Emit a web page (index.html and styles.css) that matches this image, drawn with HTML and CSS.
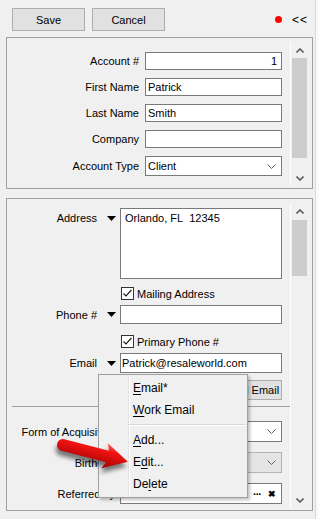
FILE: index.html
```html
<!DOCTYPE html>
<html lang="en">
<head>
    <meta charset="UTF-8">
    <meta name="viewport" content="width=device-width, initial-scale=1.0">
    <title>Customer</title>
    <link rel="stylesheet" href="styles.css">
</head>
<body>

<div class="window">
    <div class="toolbar">
        <button class="btn">Save</button>
        <button class="btn">Cancel</button>
        <span class="dot"></span>
        <span class="collapse">&lt;&lt;</span>
    </div>

    <div class="panel panel-top">
        <div class="form-top">
            <label>Account #</label>
            <div class="field num">1</div>
            <label>First Name</label>
            <div class="field">Patrick</div>
            <label>Last Name</label>
            <div class="field">Smith</div>
            <label>Company</label>
            <div class="field"></div>
            <label>Account Type</label>
            <div class="field select">Client
                <svg class="chev" width="9" height="5" viewBox="0 0 9 5"><polyline points="0.5,0.5 4.5,4.5 8.5,0.5"/></svg>
            </div>
        </div>
        <div class="scrollbar sb-top">
            <div class="sb-btn"><svg width="8" height="5" viewBox="0 0 8 5"><polyline points="0.5,4.5 4,1 7.5,4.5"/></svg></div>
            <div class="thumb thumb-top"></div>
            <div class="track"></div>
            <div class="sb-btn"><svg width="8" height="5" viewBox="0 0 8 5"><polyline points="0.5,0.5 4,4 7.5,0.5"/></svg></div>
        </div>
    </div>

    <div class="panel panel-bottom">
        <div class="form-bottom">
            <div class="row row-address">
                <label>Address</label>
                <svg class="tri" width="9" height="5" viewBox="0 0 9 5"><polygon points="0,0 9,0 4.5,5"/></svg>
                <div class="field memo">Orlando, FL&nbsp;&nbsp;12345</div>
            </div>
            <div class="row row-check row-mail">
                <div class="check">
                    <span class="box"><svg width="11" height="11" viewBox="0 0 11 11"><polyline points="1.5,5.5 4,8 9.5,2"/></svg></span>
                    Mailing Address
                </div>
            </div>
            <div class="row row-phone">
                <label>Phone #</label>
                <svg class="tri" width="9" height="5" viewBox="0 0 9 5"><polygon points="0,0 9,0 4.5,5"/></svg>
                <div class="field"></div>
            </div>
            <div class="row row-check row-primary">
                <div class="check">
                    <span class="box"><svg width="11" height="11" viewBox="0 0 11 11"><polyline points="1.5,5.5 4,8 9.5,2"/></svg></span>
                    Primary Phone #
                </div>
            </div>
            <div class="row row-email">
                <label>Email</label>
                <svg class="tri" width="9" height="5" viewBox="0 0 9 5"><polygon points="0,0 9,0 4.5,5"/></svg>
                <div class="field">Patrick@resaleworld.com</div>
            </div>
            <div class="row row-send">
                <button class="btn btn-send">Send Email</button>
            </div>
            <div class="separator"></div>
            <div class="row row-wide row-acq">
                <label>Form of Acquisition</label>
                <div class="field select">
                    <svg class="chev" width="9" height="5" viewBox="0 0 9 5"><polyline points="0.5,0.5 4.5,4.5 8.5,0.5"/></svg>
                </div>
            </div>
            <div class="row row-wide row-birth">
                <label>Birthday</label>
                <div class="field select disabled">
                    <svg class="chev" width="9" height="5" viewBox="0 0 9 5"><polyline points="0.5,0.5 4.5,4.5 8.5,0.5"/></svg>
                </div>
            </div>
            <div class="row row-wide row-ref">
                <label>Referred by</label>
                <div class="field lookup">
                    <span class="dots">&middot;&middot;&middot;</span>
                    <span class="clear">&#10006;</span>
                </div>
            </div>
        </div>
        <div class="scrollbar sb-bottom">
            <div class="sb-btn"><svg width="8" height="5" viewBox="0 0 8 5"><polyline points="0.5,4.5 4,1 7.5,4.5"/></svg></div>
            <div class="thumb thumb-bottom"></div>
            <div class="track"></div>
            <div class="sb-btn"><svg width="8" height="5" viewBox="0 0 8 5"><polyline points="0.5,0.5 4,4 7.5,0.5"/></svg></div>
        </div>
    </div>
</div>
<div class="edge"></div>

<!-- context menu opened from the Email arrow -->
<div class="menu">
    <div class="menu-item"><u>E</u>mail*</div>
    <div class="menu-item"><u>W</u>ork Email</div>
    <div class="menu-sep"></div>
    <div class="menu-item"><u>A</u>dd...</div>
    <div class="menu-item">E<u>d</u>it...</div>
    <div class="menu-item">De<u>l</u>ete</div>
</div>

<!-- callout arrow pointing at Edit... -->
<svg class="callout" width="160" height="100" viewBox="0 0 160 100">
    <defs>
        <linearGradient id="red" x1="0" y1="-13" x2="0" y2="13" gradientUnits="userSpaceOnUse">
            <stop offset="0" stop-color="#ff6a5a"/>
            <stop offset="0.3" stop-color="#f21414"/>
            <stop offset="1" stop-color="#a30000"/>
        </linearGradient>
        <filter id="blur" x="-20%" y="-50%" width="140%" height="200%">
            <feGaussianBlur stdDeviation="2"/>
        </filter>
    </defs>
    <g transform="translate(63,45) rotate(14.5)">
        <path transform="translate(0,5)" filter="url(#blur)" fill="rgba(0,0,0,0.5)"
              d="M0,-6 L46,-6 L43,-13 L67,0 L43,13 L46,6 L0,6 A6,6 0 0 1 0,-6 Z"/>
        <path fill="url(#red)"
              d="M0,-6 L46,-6 L43,-13 L67,0 L43,13 L46,6 L0,6 A6,6 0 0 1 0,-6 Z"/>
    </g>
</svg>

</body>
</html>
```

FILE: styles.css
```css
* {
    box-sizing: border-box;
}

body {
    font-family: 'Liberation Sans', Arial, sans-serif;
    font-size: 11px;
    color: #000;
    background-color: #f0f0f0;
    margin: 0;
    width: 319px;
    height: 519px;
    display: flex;
    overflow: hidden;
    position: relative;
}

.window {
    width: 315px;
}

.edge {
    width: 4px;
    border-left: 1px solid #dadada;
    background-color: #f9f9f9;
}

/* toolbar */

.toolbar {
    display: flex;
    align-items: center;
    height: 31px;
    padding: 8px 7px 0 12px;
}

.btn {
    font-family: inherit;
    font-size: 11px;
    color: #000;
    background-color: #e1e1e1;
    border: 1px solid #adadad;
    border-radius: 0;
    padding: 0;
    width: 73px;
    height: 23px;
}

.btn + .btn {
    margin-left: 7px;
}

.dot {
    width: 7px;
    height: 7px;
    border-radius: 50%;
    background-color: #f00;
    margin-left: auto;
    margin-right: 10px;
}

.collapse {
    font-size: 12px;
    letter-spacing: 1px;
}

/* group panels */

.panel {
    display: flex;
    margin-left: 6px;
    width: 307px;
    border: 1px solid #a0a0a0;
}

.panel-top {
    margin-top: 6px;
    height: 152px;
}

.panel-bottom {
    margin-top: 9px;
    height: 313px;
}

.form-top {
    width: 275px;
    padding-top: 14px;
    display: grid;
    grid-template-columns: 132px 137px;
    grid-template-rows: 18px 18px 18px 18px 20px;
    column-gap: 6px;
    row-gap: 8px;
    align-items: center;
    align-content: start;
}

label {
    text-align: right;
}

.field {
    height: 100%;
    background-color: #fff;
    border: 1px solid #7a7a7a;
    padding: 0 2px;
    display: flex;
    align-items: center;
    white-space: nowrap;
    overflow: hidden;
}

.num {
    justify-content: flex-end;
    padding-right: 4px;
}

.select .chev {
    margin-left: auto;
    margin-right: 3px;
}

.chev polyline {
    fill: none;
    stroke: #606060;
    stroke-width: 1;
}

.disabled {
    background-color: #e5e5e5;
    border-color: #b4b4b4;
}

/* scrollbars */

.scrollbar {
    width: 17px;
    margin-left: 8px;
    border-left: 1px solid #fff;
    display: flex;
    flex-direction: column;
}

.sb-top {
    margin-top: 4px;
    height: 144px;
}

.sb-bottom {
    margin-top: 4px;
    height: 305px;
}

.sb-btn {
    height: 16px;
    display: flex;
    align-items: center;
    justify-content: center;
    padding-left: 1px;
}

.sb-btn polyline {
    fill: none;
    stroke: #606060;
    stroke-width: 1.6;
}

.thumb {
    width: 15px;
    margin-left: 1px;
    background-color: #cdcdcd;
}

.thumb-top {
    height: 100px;
}

.thumb-bottom {
    margin-top: 1px;
    height: 56px;
}

.track {
    flex: 1;
}

/* lower form */

.form-bottom {
    width: 275px;
    padding-top: 9px;
    display: flex;
    flex-direction: column;
}

.row {
    display: grid;
    grid-template-columns: 91px 22px 162px;
    align-items: center;
}

.row label {
    padding-right: 1px;
}

.tri {
    margin-left: 9px;
}

.tri polygon {
    fill: #000;
}

.row-address {
    height: 71px;
    align-items: start;
}

.row-address label {
    padding-top: 4px;
}

.row-address .tri {
    margin-top: 8px;
}

.memo {
    align-items: flex-start;
    padding: 3px 4px;
}

.row-check {
    height: 13px;
}

.row-mail {
    margin-top: 8px;
}

.row-phone {
    margin-top: 5px;
    height: 19px;
}

.row-primary {
    margin-top: 11px;
}

.row-email {
    margin-top: 5px;
    height: 20px;
}

.row-email .field {
    padding-left: 1px;
}

.check {
    grid-column: 3;
    display: flex;
    align-items: center;
    gap: 3px;
    margin-left: 1px;
    height: 13px;
}

.box {
    width: 13px;
    height: 13px;
    border: 1px solid #333;
    background-color: #fff;
    display: flex;
}

.box polyline {
    fill: none;
    stroke: #222;
    stroke-width: 1.2;
}

.row-send {
    margin-top: 7px;
    height: 20px;
}

.btn-send {
    grid-column: 3;
    justify-self: end;
    width: 62px;
    height: 20px;
}

.separator {
    margin: 6px -8px 0 5px;
    height: 1px;
    background-color: #a0a0a0;
}

.row-wide label {
    grid-column: 1 / 3;
    padding-right: 5px;
    white-space: nowrap;
}

.row-wide .field {
    grid-column: 3;
}

.row-acq {
    margin-top: 14px;
    height: 21px;
}

.row-birth,
.row-ref {
    margin-top: 10px;
    height: 21px;
}

.lookup {
    justify-content: flex-end;
    padding-right: 5px;
}

.dots {
    font-weight: bold;
    font-size: 11px;
    letter-spacing: -1px;
    margin-right: 7px;
}

.clear {
    font-size: 9px;
    font-weight: bold;
}

/* context menu */

.menu {
    position: absolute;
    left: 98px;
    top: 374px;
    width: 150px;
    height: 124px;
    padding-top: 2px;
    font-size: 12px;
    background-color: #f0f0f0;
    background-image: linear-gradient(to right, transparent 29px, #e2e2e2 29px, #e2e2e2 30px, #fff 30px, #fff 31px, transparent 31px);
    border: 1px solid #a0a0a0;
    box-shadow: 2px 2px 3px rgba(0, 0, 0, 0.25);
}

.menu-item {
    height: 22px;
    padding-left: 34px;
    display: flex;
    align-items: center;
}

.menu-item u {
    text-underline-offset: 2px;
}

.menu-sep {
    height: 2px;
    margin: 3px 1px 3px 30px;
    border-top: 1px solid #d7d7d7;
    border-bottom: 1px solid #fff;
}

/* callout arrow */

.callout {
    position: absolute;
    left: 0;
    top: 400px;
    overflow: visible;
}
```
